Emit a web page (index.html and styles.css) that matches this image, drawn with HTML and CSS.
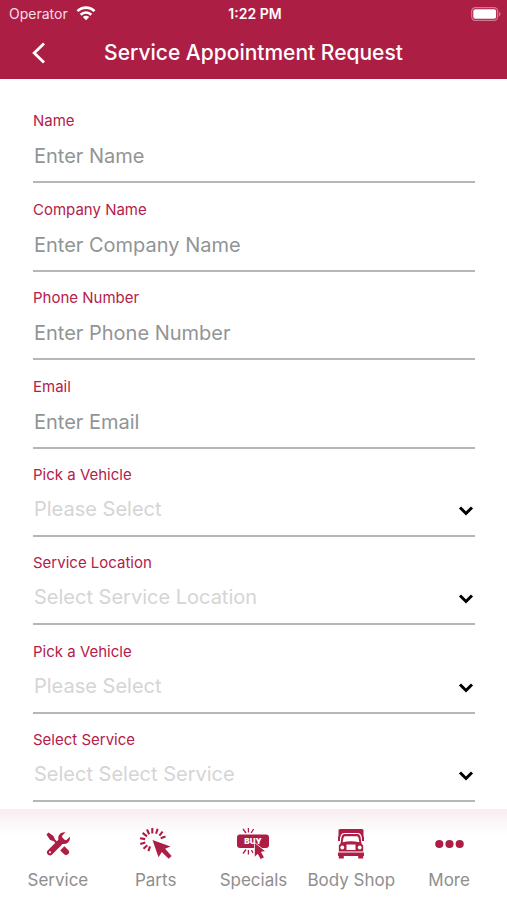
FILE: index.html
```html
<!DOCTYPE html>
<html lang="en">
<head>
<meta charset="utf-8">
<meta name="viewport" content="width=device-width, initial-scale=1">
<title>Service Appointment Request</title>
<link rel="stylesheet" href="styles.css">
</head>
<body>
<header class="top">
  <div class="status">
    <div class="carrier">
      <span>Operator</span>
      <svg class="wifi" width="20" height="16" viewBox="0 0 20 16" aria-hidden="true">
        <g fill="none" stroke="#fff" stroke-width="2.7">
          <path d="M1.500 6.100a12 12 0 0 1 17 0"/>
          <path d="M4.700 9.700a7.500 7.500 0 0 1 10.600 0"/>
        </g>
        <path d="M10 15.200 6.800 12a4.500 4.500 0 0 1 6.400 0z" fill="#fff"/>
      </svg>
    </div>
    <span class="clock">1:22 PM</span>
    <svg class="battery" width="30" height="14" viewBox="0 0 30 14" aria-hidden="true">
      <rect x=".7" y=".7" width="26" height="12.600" rx="3.600" fill="none" stroke="#d07a91" stroke-width="1.200"/>
      <rect x="2.300" y="2.300" width="22.800" height="9.400" rx="2" fill="#fff"/>
      <path d="M28 4.800c2 .8 2 3.600 0 4.400z" fill="#d07a91"/>
    </svg>
  </div>
  <div class="titlebar">
    <button class="back" type="button" aria-label="Back">
      <svg width="14" height="22" viewBox="0 0 14 22"><path d="M12 1.500 2.200 11 12 20.500" fill="none" stroke="#fff" stroke-width="2.800"/></svg>
    </button>
    <h1>Service Appointment Request</h1>
  </div>
</header>

<main>
  <form class="fields">
    <div class="field">
      <label for="name">Name</label>
      <input id="name" type="text" placeholder="Enter Name">
    </div>
    <div class="field">
      <label for="company">Company Name</label>
      <input id="company" type="text" placeholder="Enter Company Name">
    </div>
    <div class="field">
      <label for="phone">Phone Number</label>
      <input id="phone" type="tel" placeholder="Enter Phone Number">
    </div>
    <div class="field">
      <label for="email">Email</label>
      <input id="email" type="email" placeholder="Enter Email">
    </div>
    <div class="field">
      <label for="vehicle">Pick a Vehicle</label>
      <div class="picker">
        <select id="vehicle"><option>Please Select</option></select>
        <svg class="chevron" width="16" height="10" viewBox="0 0 16 10" aria-hidden="true"><path d="M2 1.500 8 7.500l6-6"/></svg>
      </div>
    </div>
    <div class="field">
      <label for="location">Service Location</label>
      <div class="picker">
        <select id="location"><option>Select Service Location</option></select>
        <svg class="chevron" width="16" height="10" viewBox="0 0 16 10" aria-hidden="true"><path d="M2 1.500 8 7.500l6-6"/></svg>
      </div>
    </div>
    <div class="field">
      <label for="vehicle2">Pick a Vehicle</label>
      <div class="picker">
        <select id="vehicle2"><option>Please Select</option></select>
        <svg class="chevron" width="16" height="10" viewBox="0 0 16 10" aria-hidden="true"><path d="M2 1.500 8 7.500l6-6"/></svg>
      </div>
    </div>
    <div class="field">
      <label for="service">Select Service</label>
      <div class="picker">
        <select id="service"><option>Select Select Service</option></select>
        <svg class="chevron" width="16" height="10" viewBox="0 0 16 10" aria-hidden="true"><path d="M2 1.500 8 7.500l6-6"/></svg>
      </div>
    </div>
  </form>
</main>

<nav class="tabs">
  <a href="#service">
    <svg width="34" height="34" viewBox="0 0 34 34" aria-hidden="true">
      <path d="M5.500 7.500 7.500 5.500l5 3.600 1.200 3-1.900 1.900-2.900-1.300z" fill="#ad1e45"/>
      <path d="m12 12 9 9" stroke="#ad1e45" stroke-width="2.200"/>
      <path d="m20.500 20.500 4.500 4.500" stroke="#ad1e45" stroke-width="6" stroke-linecap="round"/>
      <path d="M10.500 26.500 21.500 15.500" stroke="#fff" stroke-width="8"/>
      <path d="M9 25.300 20.500 13.800" stroke="#ad1e45" stroke-width="6" stroke-linecap="round"/>
      <path d="M24.400 5.200c-4.600-.6-8 3-7 7.400l4.100 4.100c4.400 1 8-2.200 7.400-7l-3.700 3.500-3.400-.9-.9-3.400z" fill="#ad1e45"/>
      <circle cx="9" cy="25.300" r="1" fill="#fff"/>
    </svg>
    <span>Service</span>
  </a>
  <a href="#parts">
    <svg width="34" height="34" viewBox="0 0 34 34" aria-hidden="true">
      <path d="M13.300 1v5.500M18.600 1.800l-1.500 5M23.600 4.600l-3.200 4M26.500 9.600l-4.800 1.700M8 2.500l2.200 4.800M3.600 5.900l4.400 3.500M1 11.200l5.200.9M1.300 17l5-1.500M4.500 21.700l3.800-3.500M9.400 24.200l1.600-4.800" fill="none" stroke="#ad1e45" stroke-width="2.100"/>
      <path d="m13.500 13 18 6.500-5.400 2.300 6.500 7.200-2.900 2.800-6.900-6.700-3.300 5.200z" fill="#ad1e45"/>
    </svg>
    <span>Parts</span>
  </a>
  <a href="#specials">
    <svg width="34" height="34" viewBox="0 0 34 34" aria-hidden="true">
      <path d="m7 2 3 4M12.400 1v4.500M17.600 2l-2.500 4M7 26.500l3-4M12.400 27.500V23M17 26l-1.500-3" stroke="#ad1e45" stroke-width="1.300"/>
      <rect x="1" y="7.500" width="32" height="13.500" rx="3" fill="#ad1e45"/>
      <text class="buy" x="17" y="17" text-anchor="middle">BUY</text>
      <path d="m18.500 15.500 11.500 9-4.600.6 3 5.400-3.900 2-2.900-5.300-3.300 3.300z" fill="#ad1e45" stroke="#fff" stroke-width=".8"/>
    </svg>
    <span>Specials</span>
  </a>
  <a href="#bodyshop">
    <svg width="34" height="34" viewBox="0 0 34 34" aria-hidden="true">
      <path d="M6 2h22q1.500 0 1.500 1.500V10h-25V3.500Q4.500 2 6 2z" fill="#ad1e45"/>
      <path d="M10.500 6.500h13q3 0 3.700 4l.8 5.500 1.800 2.500V25H4.200v-6.500L6 16l.8-5.500q.7-4 3.700-4z" fill="#ad1e45" stroke="#fff" stroke-width="1.200"/>
      <path d="M11 9.300h12q1.200 0 1.600 2l.8 4q-8.400-2-16.800 0l.8-4q.4-2 1.600-2z" fill="#fff"/>
      <path d="M4 9.500h2v4.500H4zM28 9.500h2v4.500h-2z" fill="#ad1e45"/>
      <path d="M12.500 17.500h9V23h-9z" fill="#fff"/>
      <circle cx="8.300" cy="20.500" r="1.900" fill="#fff"/><circle cx="25.700" cy="20.500" r="1.900" fill="#fff"/>
      <path d="M4 25.500h26V29h-.8v2.500h-5V29H9.800v2.500h-5V29H4z" fill="#ad1e45"/>
    </svg>
    <span>Body Shop</span>
  </a>
  <a href="#more">
    <svg width="34" height="34" viewBox="0 0 34 34" aria-hidden="true">
      <g fill="#ad1e45"><circle cx="7.300" cy="17" r="4.100"/><circle cx="17.500" cy="17" r="4.100"/><circle cx="27.700" cy="17" r="4.100"/></g>
    </svg>
    <span>More</span>
  </a>
</nav>
</body>
</html>
```
FILE: styles.css
```css
* {
  box-sizing: border-box;
}

body {
  margin: 0;
  min-height: 100vh;
  display: flex;
  flex-direction: column;
  background: #fff;
  font-family: Inter, "Liberation Sans", sans-serif;
}

.top {
  background: #ad1e45;
  color: #fff;
}

.status {
  display: grid;
  grid-template-columns: 1fr auto 1fr;
  align-items: center;
  height: 27px;
  padding: 0 6px 0 9px;
  font-size: 14px;
}

.carrier {
  display: flex;
  align-items: center;
  gap: 8px;
  color: #f6dfe5;
}

.wifi {
  margin-bottom: 2px;
}

.clock {
  font-weight: 600;
}

.battery {
  justify-self: end;
}

.titlebar {
  display: grid;
  grid-template-columns: 32px 1fr 32px;
  align-items: center;
  height: 52px;
  padding: 0 23px;
}

.back {
  display: grid;
  place-items: center;
  height: 32px;
  padding: 0;
  border: 0;
  background: none;
}

h1 {
  margin: 0;
  font-size: 21px;
  font-weight: 500;
  line-height: 24px;
  text-align: center;
  white-space: nowrap;
}

main {
  flex: 1;
  display: flex;
  padding: 16px 32px 7px 33px;
}

.fields {
  flex: 1;
  display: grid;
  grid-auto-rows: 1fr;
}

.field {
  display: flex;
  flex-direction: column;
  justify-content: flex-end;
}

.field label {
  color: #b5204a;
  font-size: 15px;
  line-height: 20px;
}

.field input,
.field select {
  display: block;
  width: 100%;
  height: 52px;
  margin: 0;
  padding: 0 1px;
  border: 0;
  border-bottom: 2px solid #b4b7b7;
  border-radius: 0;
  background: none;
  font: inherit;
  font-size: 20px;
  outline: 0;
}

.field input::placeholder {
  color: #909595;
  opacity: 1;
}

.field select {
  appearance: none;
  padding-bottom: 2px;
  color: #d5d5d5;
}

.picker {
  position: relative;
}

.chevron {
  position: absolute;
  right: 1px;
  top: 21px;
  fill: none;
  stroke: #000;
  stroke-width: 3;
  pointer-events: none;
}

.tabs {
  display: grid;
  grid-template-columns: repeat(5, 1fr);
  height: 91px;
  padding: 18px 9px 0;
  background: linear-gradient(#f8edf0, #fff 26px);
}

.tabs a {
  display: flex;
  flex-direction: column;
  align-items: center;
  gap: 8px;
  color: #8e8e8e;
  font-size: 17px;
  line-height: 22px;
  text-decoration: none;
  white-space: nowrap;
}

.buy {
  fill: #fff;
  font-size: 8px;
  font-weight: 900;
}
```
